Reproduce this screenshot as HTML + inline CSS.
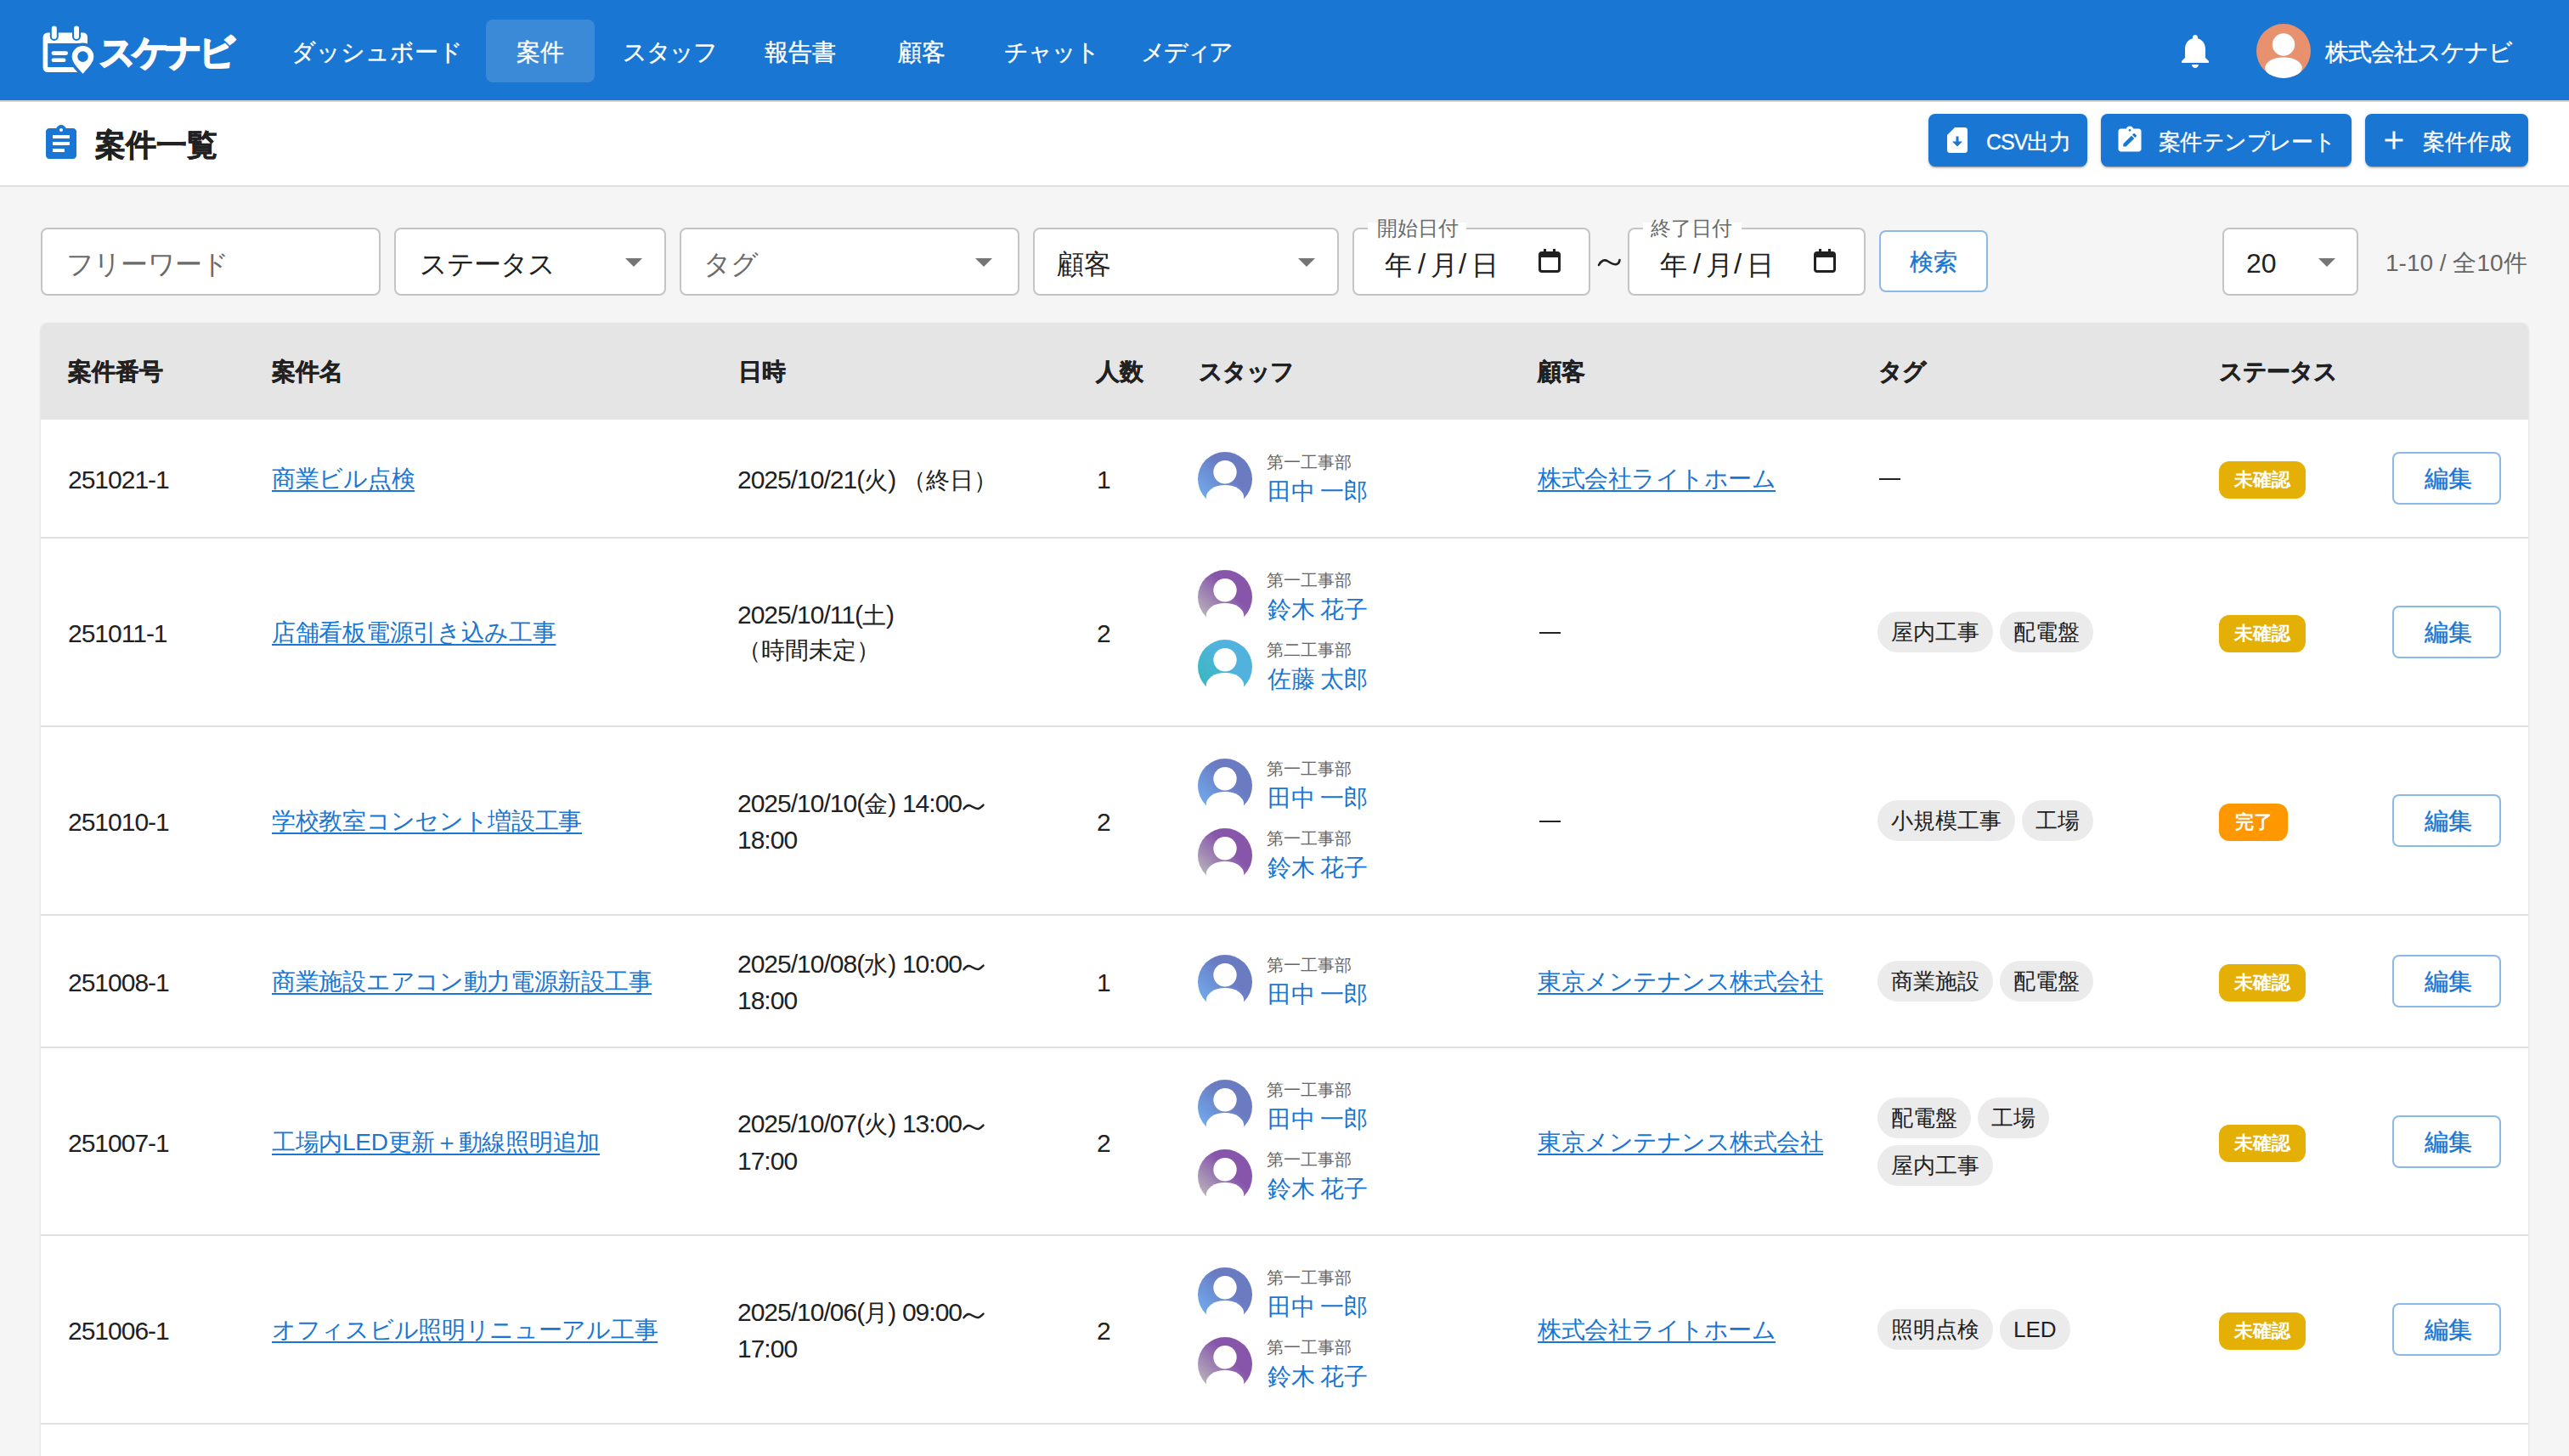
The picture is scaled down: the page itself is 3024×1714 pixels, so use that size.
<!DOCTYPE html><html lang="ja"><head><meta charset="utf-8"><title>案件一覧</title>
<style>
html,body{margin:0;padding:0;width:3024px;height:1714px;overflow:hidden;background:#f5f5f5;font-family:"Liberation Sans",sans-serif;}
.t{position:absolute;line-height:1;white-space:nowrap;}
.b{position:absolute;box-sizing:border-box;}
svg.a{position:absolute;display:block;}
svg.i{display:inline-block;}
.d{font-size:30px;letter-spacing:-1px;}
</style></head><body>
<div class="b" style="left:0;top:0;width:3024px;height:118px;background:#1976d2;box-shadow:0 1px 3px rgba(0,0,0,0.25);"></div>
<svg class="a" style="left:44px;top:26px" width="72" height="66" viewBox="44 26 72 66">
<path fill="#fff" fill-rule="evenodd" d="M56 38.5h42a5 5 0 0 1 5 5V85H56a5.4 5.4 0 0 1-5.4-5.4V43.9a5.4 5.4 0 0 1 5.4-5.4zM56.2 51v28h41.2V51z"/>
<rect x="59.8" y="29.5" width="8" height="17.5" rx="4" fill="#fff" stroke="#1976d2" stroke-width="2"/>
<rect x="86" y="29.5" width="8" height="17.5" rx="4" fill="#fff" stroke="#1976d2" stroke-width="2"/>
<rect x="60.6" y="60.3" width="19.4" height="4.6" rx="2.3" fill="#fff"/>
<rect x="60.6" y="68.4" width="16.9" height="4.6" rx="2.3" fill="#fff"/>
<path fill="#fff" stroke="#1976d2" stroke-width="3.5" d="M97.5 52.3a14.6 14.6 0 0 1 14.6 14.6c0 8-8.5 15.5-14.6 22.5c-6.1-7-14.6-14.5-14.6-22.5a14.6 14.6 0 0 1 14.6-14.6z"/>
<circle cx="97.5" cy="66.6" r="6.3" fill="#1976d2"/>
</svg>
<div class="t" style="left:117px;top:40.6px;font-size:42px;color:#fff;font-weight:bold;letter-spacing:-4px;-webkit-text-stroke:2px #fff;">スケナビ</div>
<div class="b" style="left:572px;top:23px;width:128px;height:74px;border-radius:8px;background:rgba(255,255,255,0.15);"></div>
<div class="t" style="left:342.5px;top:47.8px;font-size:28px;color:#fff;font-weight:normal;letter-spacing:0px;-webkit-text-stroke:0.35px #fff;">ダッシュボード</div>
<div class="t" style="left:608px;top:47.8px;font-size:28px;color:#fff;font-weight:normal;letter-spacing:0px;-webkit-text-stroke:0.35px #fff;">案件</div>
<div class="t" style="left:733px;top:47.8px;font-size:28px;color:#fff;font-weight:normal;letter-spacing:-1.5px;-webkit-text-stroke:0.35px #fff;">スタッフ</div>
<div class="t" style="left:899.5px;top:47.8px;font-size:28px;color:#fff;font-weight:normal;letter-spacing:0px;-webkit-text-stroke:0.35px #fff;">報告書</div>
<div class="t" style="left:1057px;top:47.8px;font-size:28px;color:#fff;font-weight:normal;letter-spacing:0px;-webkit-text-stroke:0.35px #fff;">顧客</div>
<div class="t" style="left:1181.5px;top:47.8px;font-size:28px;color:#fff;font-weight:normal;letter-spacing:-1px;-webkit-text-stroke:0.35px #fff;">チャット</div>
<div class="t" style="left:1343px;top:47.8px;font-size:28px;color:#fff;font-weight:normal;letter-spacing:-2.2px;-webkit-text-stroke:0.35px #fff;">メディア</div>
<svg class="a" style="left:2560px;top:35.6px" width="48" height="48" viewBox="0 0 24 24"><path fill="#fff" d="M12 22c1.1 0 2-.9 2-2h-4c0 1.1.89 2 2 2zm6-6v-5c0-3.07-1.64-5.64-4.5-6.32V4c0-.83-.67-1.5-1.5-1.5s-1.5.67-1.5 1.5v.68C7.63 5.36 6 7.92 6 11v5l-2 2v1h16v-1l-2-2z"/></svg>
<svg class="a" style="left:2656px;top:28px" width="64" height="64" viewBox="0 0 64 64"><defs><clipPath id="ch"><circle cx="32" cy="32" r="32"/></clipPath></defs>
<circle cx="32" cy="32" r="32" fill="#e8916f"/><g clip-path="url(#ch)" fill="#fff"><circle cx="32" cy="24.5" r="13.2"/><ellipse cx="32" cy="52" rx="21.8" ry="12.6"/></g></svg>
<div class="t" style="left:2737px;top:47.5px;font-size:28px;color:#fff;font-weight:normal;letter-spacing:-1px;-webkit-text-stroke:0.35px #fff;">株式会社スケナビ</div>
<div class="b" style="left:0;top:118px;width:3024px;height:102px;background:#fff;border-bottom:2px solid #e0e0e0;"></div>
<div class="b" style="left:0;top:118px;width:3024px;height:2px;background:#d2d2d2;"></div>
<svg class="a" style="left:48px;top:145px" width="48" height="48" viewBox="0 0 24 24"><path fill="#1976d2" d="M19 3h-4.18C14.4 1.84 13.3 1 12 1c-1.3 0-2.4.84-2.82 2H5c-1.1 0-2 .9-2 2v14c0 1.1.9 2 2 2h14c1.1 0 2-.9 2-2V5c0-1.1-.9-2-2-2zm-7 0c.55 0 1 .45 1 1s-.45 1-1 1-1-.45-1-1 .45-1 1-1zm2 14H7v-2h7v2zm3-4H7v-2h10v2zm0-4H7V7h10v2z"/></svg>
<div class="t" style="left:112px;top:152.5px;font-size:36px;color:#212121;font-weight:bold;-webkit-text-stroke:0.6px #212121;">案件一覧</div>
<div class="b" style="left:2270px;top:134px;width:187px;height:62px;border-radius:8px;background:#1976d2;box-shadow:0 3px 1px -2px rgba(0,0,0,0.2),0 2px 2px 0 rgba(0,0,0,0.14),0 1px 5px 0 rgba(0,0,0,0.12);"></div>
<div class="b" style="left:2473px;top:134px;width:295px;height:62px;border-radius:8px;background:#1976d2;box-shadow:0 3px 1px -2px rgba(0,0,0,0.2),0 2px 2px 0 rgba(0,0,0,0.14),0 1px 5px 0 rgba(0,0,0,0.12);"></div>
<div class="b" style="left:2784px;top:134px;width:192px;height:62px;border-radius:8px;background:#1976d2;box-shadow:0 3px 1px -2px rgba(0,0,0,0.2),0 2px 2px 0 rgba(0,0,0,0.14),0 1px 5px 0 rgba(0,0,0,0.12);"></div>
<svg class="a" style="left:2286px;top:147px" width="36" height="36" viewBox="0 0 24 24"><path fill="#fff" d="M18 2h-8L4 8v12c0 1.1.9 2 2 2h12c1.1 0 2-.9 2-2V4c0-1.1-.9-2-2-2zm-6 15-4-4h3V9.02L13 9v4h3l-4 4z"/></svg>
<div class="t" style="left:2338px;top:153.6px;font-size:26px;color:#fff;font-weight:normal;-webkit-text-stroke:0.3px #fff;"><span style="font-size:25px;letter-spacing:-1px">CSV</span>出力</div>
<svg class="a" style="left:2488.5px;top:147px" width="36" height="36" viewBox="0 0 24 24"><path fill="#fff" d="M19 3h-4.18C14.4 1.84 13.3 1 12 1c-1.3 0-2.4.84-2.82 2H5c-1.1 0-2 .9-2 2v14c0 1.1.9 2 2 2h14c1.1 0 2-.9 2-2V5c0-1.1-.9-2-2-2zm-7 .3c.5 0 .9.4.9.9s-.4.9-.9.9-.9-.4-.9-.9.4-.9.9-.9z"/><g transform="translate(6.9 6.6) scale(0.58) translate(-3 -3)"><path fill="#1976d2" d="M3 17.25V21h3.75L17.81 9.94l-3.75-3.75L3 17.25zM20.71 7.04c.39-.39.39-1.02 0-1.41l-2.34-2.34c-.39-.39-1.02-.39-1.41 0l-1.83 1.83 3.75 3.75 1.83-1.83z"/></g></svg>
<div class="t" style="left:2541px;top:153.6px;font-size:26px;color:#fff;font-weight:normal;letter-spacing:-0.6px;-webkit-text-stroke:0.3px #fff;">案件テンプレート</div>
<svg class="a" style="left:2799.5px;top:146.5px" width="36" height="36" viewBox="0 0 24 24"><path fill="#fff" d="M19 13h-6v6h-2v-6H5v-2h6V5h2v6h6v2z"/></svg>
<div class="t" style="left:2852px;top:153.6px;font-size:26px;color:#fff;font-weight:normal;-webkit-text-stroke:0.3px #fff;">案件作成</div>
<div class="b" style="left:48px;top:268px;width:400px;height:80px;border:2px solid #c4c4c4;border-radius:8px;background:#fff;"></div>
<div class="t" style="left:78px;top:295px;font-size:32px;color:#6b6b6b;font-weight:normal;letter-spacing:-0.8px;">フリーワード</div>
<div class="b" style="left:464px;top:268px;width:320px;height:80px;border:2px solid #c4c4c4;border-radius:8px;background:#fff;"></div>
<div class="t" style="left:494px;top:295px;font-size:32px;color:#212121;font-weight:normal;letter-spacing:-1px;">ステータス</div>
<svg class="a" style="left:736px;top:304px" width="20" height="10" viewBox="0 0 20 10"><path fill="#757575" d="M0 0h20L10 10z"/></svg>
<div class="b" style="left:800px;top:268px;width:400px;height:80px;border:2px solid #c4c4c4;border-radius:8px;background:#fff;"></div>
<div class="t" style="left:828px;top:295px;font-size:32px;color:#6b6b6b;font-weight:normal;letter-spacing:-1px;">タグ</div>
<svg class="a" style="left:1148px;top:304px" width="20" height="10" viewBox="0 0 20 10"><path fill="#757575" d="M0 0h20L10 10z"/></svg>
<div class="b" style="left:1216px;top:268px;width:360px;height:80px;border:2px solid #c4c4c4;border-radius:8px;background:#fff;"></div>
<div class="t" style="left:1244px;top:295px;font-size:32px;color:#212121;font-weight:normal;">顧客</div>
<svg class="a" style="left:1528px;top:304px" width="20" height="10" viewBox="0 0 20 10"><path fill="#757575" d="M0 0h20L10 10z"/></svg>
<div class="b" style="left:1592px;top:268px;width:280px;height:80px;border:2px solid #c4c4c4;border-radius:8px;background:#fff;"></div>
<div class="b" style="left:1610px;top:262px;width:116px;height:10px;background:#fff;"></div>
<div class="t" style="left:1621px;top:257px;font-size:24px;color:#6b6b6b;font-weight:normal;">開始日付</div>
<div class="t" style="left:1630px;top:295.5px;font-size:32px;color:#212121;font-weight:normal;">年</div>
<div class="t" style="left:1669px;top:294px;font-size:33px;color:#212121;font-weight:normal;">/</div>
<div class="t" style="left:1684px;top:295.5px;font-size:32px;color:#212121;font-weight:normal;">月</div>
<div class="t" style="left:1717px;top:294px;font-size:33px;color:#212121;font-weight:normal;">/</div>
<div class="t" style="left:1732px;top:295.5px;font-size:32px;color:#212121;font-weight:normal;">日</div>
<svg class="a" style="left:1811px;top:293px" width="26" height="28" viewBox="0 0 26 28"><path fill="#212121" fill-rule="evenodd" d="M6 0h3v3h8V0h3v3h2a4 4 0 0 1 4 4v17a4 4 0 0 1-4 4H4a4 4 0 0 1-4-4V7a4 4 0 0 1 4-4h2zM3 10v14a1 1 0 0 0 1 1h18a1 1 0 0 0 1-1V10z"/></svg>
<svg class="a" style="left:1880px;top:302px" width="28" height="13" viewBox="0 0 28 13"><path d="M2 10C5 4.5 8.5 3 12.5 5.5S20 10 23 9S26 6.5 26.5 4" fill="none" stroke="#212121" stroke-width="2.6" stroke-linecap="round"/></svg>
<div class="b" style="left:1916px;top:268px;width:280px;height:80px;border:2px solid #c4c4c4;border-radius:8px;background:#fff;"></div>
<div class="b" style="left:1934px;top:262px;width:116px;height:10px;background:#fff;"></div>
<div class="t" style="left:1943px;top:257px;font-size:24px;color:#6b6b6b;font-weight:normal;">終了日付</div>
<div class="t" style="left:1954px;top:295.5px;font-size:32px;color:#212121;font-weight:normal;">年</div>
<div class="t" style="left:1993px;top:294px;font-size:33px;color:#212121;font-weight:normal;">/</div>
<div class="t" style="left:2008px;top:295.5px;font-size:32px;color:#212121;font-weight:normal;">月</div>
<div class="t" style="left:2041px;top:294px;font-size:33px;color:#212121;font-weight:normal;">/</div>
<div class="t" style="left:2056px;top:295.5px;font-size:32px;color:#212121;font-weight:normal;">日</div>
<svg class="a" style="left:2135px;top:293px" width="26" height="28" viewBox="0 0 26 28"><path fill="#212121" fill-rule="evenodd" d="M6 0h3v3h8V0h3v3h2a4 4 0 0 1 4 4v17a4 4 0 0 1-4 4H4a4 4 0 0 1-4-4V7a4 4 0 0 1 4-4h2zM3 10v14a1 1 0 0 0 1 1h18a1 1 0 0 0 1-1V10z"/></svg>
<div class="b" style="left:2212px;top:271px;width:128px;height:73px;border:2px solid rgba(25,118,210,0.5);border-radius:8px;background:#fff;"></div>
<div class="t" style="left:2248px;top:295px;font-size:28px;color:#1976d2;font-weight:normal;-webkit-text-stroke:0.3px #1976d2;">検索</div>
<div class="b" style="left:2616px;top:268px;width:160px;height:80px;border:2px solid #c4c4c4;border-radius:8px;background:#fff;"></div>
<div class="t" style="left:2644px;top:294px;font-size:32px;color:#212121;font-weight:normal;">20</div>
<svg class="a" style="left:2729px;top:304px" width="20" height="10" viewBox="0 0 20 10"><path fill="#757575" d="M0 0h20L10 10z"/></svg>
<div class="t" style="left:2808px;top:296px;font-size:28px;color:#666;font-weight:normal;">1-10 / 全10件</div>
<div class="b" style="left:48px;top:380px;width:2928px;height:1400px;background:#fff;border-radius:8px;box-shadow:0 2px 1px -1px rgba(0,0,0,0.2),0 1px 1px 0 rgba(0,0,0,0.14),0 1px 3px 0 rgba(0,0,0,0.12);"></div>
<div class="b" style="left:48px;top:380px;width:2928px;height:114px;background:#e5e5e5;border-radius:8px 8px 0 0;"></div>
<div class="t" style="left:80px;top:423.5px;font-size:28px;color:#212121;font-weight:bold;letter-spacing:0px;-webkit-text-stroke:0.4px #212121;">案件番号</div>
<div class="t" style="left:320px;top:423.5px;font-size:28px;color:#212121;font-weight:bold;letter-spacing:0px;-webkit-text-stroke:0.4px #212121;">案件名</div>
<div class="t" style="left:869px;top:423.5px;font-size:28px;color:#212121;font-weight:bold;letter-spacing:0px;-webkit-text-stroke:0.4px #212121;">日時</div>
<div class="t" style="left:1290px;top:423.5px;font-size:28px;color:#212121;font-weight:bold;letter-spacing:0px;-webkit-text-stroke:0.4px #212121;">人数</div>
<div class="t" style="left:1411px;top:423.5px;font-size:28px;color:#212121;font-weight:bold;letter-spacing:-1px;-webkit-text-stroke:0.4px #212121;">スタッフ</div>
<div class="t" style="left:1810px;top:423.5px;font-size:28px;color:#212121;font-weight:bold;letter-spacing:0px;-webkit-text-stroke:0.4px #212121;">顧客</div>
<div class="t" style="left:2211px;top:423.5px;font-size:28px;color:#212121;font-weight:bold;letter-spacing:-1px;-webkit-text-stroke:0.4px #212121;">タグ</div>
<div class="t" style="left:2612px;top:423.5px;font-size:28px;color:#212121;font-weight:bold;letter-spacing:-1px;-webkit-text-stroke:0.4px #212121;">ステータス</div>
<div class="b" style="left:48px;top:632px;width:2928px;height:2px;background:#e0e0e0;"></div>
<div class="b" style="left:48px;top:854px;width:2928px;height:2px;background:#e0e0e0;"></div>
<div class="b" style="left:48px;top:1076px;width:2928px;height:2px;background:#e0e0e0;"></div>
<div class="b" style="left:48px;top:1232px;width:2928px;height:2px;background:#e0e0e0;"></div>
<div class="b" style="left:48px;top:1453px;width:2928px;height:2px;background:#e0e0e0;"></div>
<div class="b" style="left:48px;top:1675px;width:2928px;height:2px;background:#e0e0e0;"></div>
<div class="t" style="left:80px;top:550.3px;font-size:28px;color:#212121;font-weight:normal;"><span class="d">251021-1</span></div>
<div class="t" style="left:320px;top:550.3px;font-size:28px;color:#1976d2;font-weight:normal;letter-spacing:-0.3px;text-decoration:underline;text-decoration-thickness:2px;text-underline-offset:4px;">商業ビル点検</div>
<div class="t" style="left:868px;top:550.3px;font-size:28px;color:#212121;font-weight:normal;"><span class="d">2025/10/21(</span>火<span class="d">)</span> （終日）</div>
<div class="t" style="left:1291px;top:550.3px;font-size:28px;color:#212121;font-weight:normal;"><span class="d">1</span></div>
<svg class="a" style="left:1410px;top:531.7px;overflow:visible" width="64" height="64" viewBox="0 0 64 64"><defs><linearGradient id="g1" x1="0" y1="1" x2="1" y2="0"><stop offset="0.15" stop-color="#70a8ea"/><stop offset="0.6" stop-color="#6a7bc2"/></linearGradient></defs><circle cx="32" cy="32" r="32" fill="url(#g1)"/><g fill="#fff"><circle cx="32" cy="23.8" r="13.7"/><ellipse cx="32" cy="53.5" rx="22.2" ry="14.6"/></g></svg>
<div class="t" style="left:1491px;top:534.1px;font-size:20px;color:#666;font-weight:normal;">第一工事部</div>
<div class="t" style="left:1492px;top:564.7px;font-size:28px;color:#1976d2;font-weight:normal;letter-spacing:-0.5px;">田中 一郎</div>
<div class="t" style="left:1810px;top:550.3px;font-size:28px;color:#1976d2;font-weight:normal;letter-spacing:-0.5px;text-decoration:underline;text-decoration-thickness:2px;text-underline-offset:4px;">株式会社ライトホーム</div>
<div class="b" style="left:2212px;top:563.0px;width:25px;height:2px;background:#222;"></div>
<div class="b" style="left:2612px;top:543.0px;width:102px;height:44px;border-radius:12px;background:#e5b006;color:#fff;font-size:22px;font-weight:bold;line-height:44px;text-align:center;white-space:nowrap;">未確認</div>
<div class="b" style="left:2816px;top:532.0px;width:128px;height:62px;border:2px solid rgba(25,118,210,0.5);border-radius:8px;background:#fff;"></div>
<div class="t" style="left:2853.5px;top:550.3px;font-size:28px;color:#1976d2;font-weight:normal;-webkit-text-stroke:0.4px #1976d2;">編集</div>
<div class="t" style="left:80px;top:731.3px;font-size:28px;color:#212121;font-weight:normal;"><span class="d">251011-1</span></div>
<div class="t" style="left:320px;top:731.3px;font-size:28px;color:#1976d2;font-weight:normal;letter-spacing:-0.3px;text-decoration:underline;text-decoration-thickness:2px;text-underline-offset:4px;">店舗看板電源引き込み工事</div>
<div class="t" style="left:868px;top:708.8px;font-size:28px;color:#212121;font-weight:normal;"><span class="d">2025/10/11(</span>土<span class="d">)</span></div>
<div class="t" style="left:868px;top:752.3px;font-size:28px;color:#212121;font-weight:normal;">（時間未定）</div>
<div class="t" style="left:1291px;top:731.3px;font-size:28px;color:#212121;font-weight:normal;"><span class="d">2</span></div>
<svg class="a" style="left:1410px;top:671px;overflow:visible" width="64" height="64" viewBox="0 0 64 64"><defs><linearGradient id="g2" x1="0" y1="1" x2="1" y2="0"><stop offset="0.15" stop-color="#b4acba"/><stop offset="0.6" stop-color="#8756ab"/></linearGradient></defs><circle cx="32" cy="32" r="32" fill="url(#g2)"/><g fill="#fff"><circle cx="32" cy="23.8" r="13.7"/><ellipse cx="32" cy="53.5" rx="22.2" ry="14.6"/></g></svg>
<div class="t" style="left:1491px;top:673.4px;font-size:20px;color:#666;font-weight:normal;">第一工事部</div>
<div class="t" style="left:1492px;top:704.0px;font-size:28px;color:#1976d2;font-weight:normal;letter-spacing:-0.5px;">鈴木 花子</div>
<svg class="a" style="left:1410px;top:752.8px;overflow:visible" width="64" height="64" viewBox="0 0 64 64"><defs><linearGradient id="g3" x1="0" y1="1" x2="1" y2="0"><stop offset="0.15" stop-color="#3ab8c0"/><stop offset="0.6" stop-color="#52b2de"/></linearGradient></defs><circle cx="32" cy="32" r="32" fill="url(#g3)"/><g fill="#fff"><circle cx="32" cy="23.8" r="13.7"/><ellipse cx="32" cy="53.5" rx="22.2" ry="14.6"/></g></svg>
<div class="t" style="left:1491px;top:755.2px;font-size:20px;color:#666;font-weight:normal;">第二工事部</div>
<div class="t" style="left:1492px;top:785.8px;font-size:28px;color:#1976d2;font-weight:normal;letter-spacing:-0.5px;">佐藤 太郎</div>
<div class="b" style="left:1812px;top:744.0px;width:25px;height:2px;background:#222;"></div>
<div class="b" style="left:2210px;top:720.0px;display:flex;gap:8px;"><span style="display:inline-block;height:48px;line-height:48px;padding:0 16px;border-radius:24px;background:#ebebeb;color:#212121;font-size:26px;white-space:nowrap;">屋内工事</span><span style="display:inline-block;height:48px;line-height:48px;padding:0 16px;border-radius:24px;background:#ebebeb;color:#212121;font-size:26px;white-space:nowrap;">配電盤</span></div>
<div class="b" style="left:2612px;top:724.0px;width:102px;height:44px;border-radius:12px;background:#e5b006;color:#fff;font-size:22px;font-weight:bold;line-height:44px;text-align:center;white-space:nowrap;">未確認</div>
<div class="b" style="left:2816px;top:713.0px;width:128px;height:62px;border:2px solid rgba(25,118,210,0.5);border-radius:8px;background:#fff;"></div>
<div class="t" style="left:2853.5px;top:731.3px;font-size:28px;color:#1976d2;font-weight:normal;-webkit-text-stroke:0.4px #1976d2;">編集</div>
<div class="t" style="left:80px;top:953.3px;font-size:28px;color:#212121;font-weight:normal;"><span class="d">251010-1</span></div>
<div class="t" style="left:320px;top:953.3px;font-size:28px;color:#1976d2;font-weight:normal;letter-spacing:-0.3px;text-decoration:underline;text-decoration-thickness:2px;text-underline-offset:4px;">学校教室コンセント増設工事</div>
<div class="t" style="left:868px;top:930.8px;font-size:28px;color:#212121;font-weight:normal;"><span class="d">2025/10/10(</span>金<span class="d">)</span> <span class="d">14:00</span><svg class="i" width="26" height="8" viewBox="0 0 26 8" style="vertical-align:2px;margin-left:1px"><path d="M1.5 6.2C4 2.5 7 1.2 10 2.8S16 6.8 19 5.8S23 3 24.5 1.6" fill="none" stroke="#212121" stroke-width="2.4" stroke-linecap="round"/></svg></div>
<div class="t" style="left:868px;top:974.3px;font-size:28px;color:#212121;font-weight:normal;"><span class="d">18:00</span></div>
<div class="t" style="left:1291px;top:953.3px;font-size:28px;color:#212121;font-weight:normal;"><span class="d">2</span></div>
<svg class="a" style="left:1410px;top:893px;overflow:visible" width="64" height="64" viewBox="0 0 64 64"><defs><linearGradient id="g4" x1="0" y1="1" x2="1" y2="0"><stop offset="0.15" stop-color="#70a8ea"/><stop offset="0.6" stop-color="#6a7bc2"/></linearGradient></defs><circle cx="32" cy="32" r="32" fill="url(#g4)"/><g fill="#fff"><circle cx="32" cy="23.8" r="13.7"/><ellipse cx="32" cy="53.5" rx="22.2" ry="14.6"/></g></svg>
<div class="t" style="left:1491px;top:895.4px;font-size:20px;color:#666;font-weight:normal;">第一工事部</div>
<div class="t" style="left:1492px;top:926.0px;font-size:28px;color:#1976d2;font-weight:normal;letter-spacing:-0.5px;">田中 一郎</div>
<svg class="a" style="left:1410px;top:974.8px;overflow:visible" width="64" height="64" viewBox="0 0 64 64"><defs><linearGradient id="g5" x1="0" y1="1" x2="1" y2="0"><stop offset="0.15" stop-color="#b4acba"/><stop offset="0.6" stop-color="#8756ab"/></linearGradient></defs><circle cx="32" cy="32" r="32" fill="url(#g5)"/><g fill="#fff"><circle cx="32" cy="23.8" r="13.7"/><ellipse cx="32" cy="53.5" rx="22.2" ry="14.6"/></g></svg>
<div class="t" style="left:1491px;top:977.2px;font-size:20px;color:#666;font-weight:normal;">第一工事部</div>
<div class="t" style="left:1492px;top:1007.8px;font-size:28px;color:#1976d2;font-weight:normal;letter-spacing:-0.5px;">鈴木 花子</div>
<div class="b" style="left:1812px;top:966.0px;width:25px;height:2px;background:#222;"></div>
<div class="b" style="left:2210px;top:942.0px;display:flex;gap:8px;"><span style="display:inline-block;height:48px;line-height:48px;padding:0 16px;border-radius:24px;background:#ebebeb;color:#212121;font-size:26px;white-space:nowrap;">小規模工事</span><span style="display:inline-block;height:48px;line-height:48px;padding:0 16px;border-radius:24px;background:#ebebeb;color:#212121;font-size:26px;white-space:nowrap;">工場</span></div>
<div class="b" style="left:2612px;top:946.0px;width:81px;height:44px;border-radius:12px;background:#ff9800;color:#fff;font-size:22px;font-weight:bold;line-height:44px;text-align:center;white-space:nowrap;">完了</div>
<div class="b" style="left:2816px;top:935.0px;width:128px;height:62px;border:2px solid rgba(25,118,210,0.5);border-radius:8px;background:#fff;"></div>
<div class="t" style="left:2853.5px;top:953.3px;font-size:28px;color:#1976d2;font-weight:normal;-webkit-text-stroke:0.4px #1976d2;">編集</div>
<div class="t" style="left:80px;top:1142.3px;font-size:28px;color:#212121;font-weight:normal;"><span class="d">251008-1</span></div>
<div class="t" style="left:320px;top:1142.3px;font-size:28px;color:#1976d2;font-weight:normal;letter-spacing:-0.3px;text-decoration:underline;text-decoration-thickness:2px;text-underline-offset:4px;">商業施設エアコン動力電源新設工事</div>
<div class="t" style="left:868px;top:1119.8px;font-size:28px;color:#212121;font-weight:normal;"><span class="d">2025/10/08(</span>水<span class="d">)</span> <span class="d">10:00</span><svg class="i" width="26" height="8" viewBox="0 0 26 8" style="vertical-align:2px;margin-left:1px"><path d="M1.5 6.2C4 2.5 7 1.2 10 2.8S16 6.8 19 5.8S23 3 24.5 1.6" fill="none" stroke="#212121" stroke-width="2.4" stroke-linecap="round"/></svg></div>
<div class="t" style="left:868px;top:1163.3px;font-size:28px;color:#212121;font-weight:normal;"><span class="d">18:00</span></div>
<div class="t" style="left:1291px;top:1142.3px;font-size:28px;color:#212121;font-weight:normal;"><span class="d">1</span></div>
<svg class="a" style="left:1410px;top:1123.7px;overflow:visible" width="64" height="64" viewBox="0 0 64 64"><defs><linearGradient id="g6" x1="0" y1="1" x2="1" y2="0"><stop offset="0.15" stop-color="#70a8ea"/><stop offset="0.6" stop-color="#6a7bc2"/></linearGradient></defs><circle cx="32" cy="32" r="32" fill="url(#g6)"/><g fill="#fff"><circle cx="32" cy="23.8" r="13.7"/><ellipse cx="32" cy="53.5" rx="22.2" ry="14.6"/></g></svg>
<div class="t" style="left:1491px;top:1126.1px;font-size:20px;color:#666;font-weight:normal;">第一工事部</div>
<div class="t" style="left:1492px;top:1156.7px;font-size:28px;color:#1976d2;font-weight:normal;letter-spacing:-0.5px;">田中 一郎</div>
<div class="t" style="left:1810px;top:1142.3px;font-size:28px;color:#1976d2;font-weight:normal;letter-spacing:-0.5px;text-decoration:underline;text-decoration-thickness:2px;text-underline-offset:4px;">東京メンテナンス株式会社</div>
<div class="b" style="left:2210px;top:1131.0px;display:flex;gap:8px;"><span style="display:inline-block;height:48px;line-height:48px;padding:0 16px;border-radius:24px;background:#ebebeb;color:#212121;font-size:26px;white-space:nowrap;">商業施設</span><span style="display:inline-block;height:48px;line-height:48px;padding:0 16px;border-radius:24px;background:#ebebeb;color:#212121;font-size:26px;white-space:nowrap;">配電盤</span></div>
<div class="b" style="left:2612px;top:1135.0px;width:102px;height:44px;border-radius:12px;background:#e5b006;color:#fff;font-size:22px;font-weight:bold;line-height:44px;text-align:center;white-space:nowrap;">未確認</div>
<div class="b" style="left:2816px;top:1124.0px;width:128px;height:62px;border:2px solid rgba(25,118,210,0.5);border-radius:8px;background:#fff;"></div>
<div class="t" style="left:2853.5px;top:1142.3px;font-size:28px;color:#1976d2;font-weight:normal;-webkit-text-stroke:0.4px #1976d2;">編集</div>
<div class="t" style="left:80px;top:1330.8px;font-size:28px;color:#212121;font-weight:normal;"><span class="d">251007-1</span></div>
<div class="t" style="left:320px;top:1330.8px;font-size:28px;color:#1976d2;font-weight:normal;letter-spacing:-0.3px;text-decoration:underline;text-decoration-thickness:2px;text-underline-offset:4px;">工場内LED更新＋動線照明追加</div>
<div class="t" style="left:868px;top:1308.3px;font-size:28px;color:#212121;font-weight:normal;"><span class="d">2025/10/07(</span>火<span class="d">)</span> <span class="d">13:00</span><svg class="i" width="26" height="8" viewBox="0 0 26 8" style="vertical-align:2px;margin-left:1px"><path d="M1.5 6.2C4 2.5 7 1.2 10 2.8S16 6.8 19 5.8S23 3 24.5 1.6" fill="none" stroke="#212121" stroke-width="2.4" stroke-linecap="round"/></svg></div>
<div class="t" style="left:868px;top:1351.8px;font-size:28px;color:#212121;font-weight:normal;"><span class="d">17:00</span></div>
<div class="t" style="left:1291px;top:1330.8px;font-size:28px;color:#212121;font-weight:normal;"><span class="d">2</span></div>
<svg class="a" style="left:1410px;top:1271px;overflow:visible" width="64" height="64" viewBox="0 0 64 64"><defs><linearGradient id="g7" x1="0" y1="1" x2="1" y2="0"><stop offset="0.15" stop-color="#70a8ea"/><stop offset="0.6" stop-color="#6a7bc2"/></linearGradient></defs><circle cx="32" cy="32" r="32" fill="url(#g7)"/><g fill="#fff"><circle cx="32" cy="23.8" r="13.7"/><ellipse cx="32" cy="53.5" rx="22.2" ry="14.6"/></g></svg>
<div class="t" style="left:1491px;top:1273.4px;font-size:20px;color:#666;font-weight:normal;">第一工事部</div>
<div class="t" style="left:1492px;top:1304.0px;font-size:28px;color:#1976d2;font-weight:normal;letter-spacing:-0.5px;">田中 一郎</div>
<svg class="a" style="left:1410px;top:1352.8px;overflow:visible" width="64" height="64" viewBox="0 0 64 64"><defs><linearGradient id="g8" x1="0" y1="1" x2="1" y2="0"><stop offset="0.15" stop-color="#b4acba"/><stop offset="0.6" stop-color="#8756ab"/></linearGradient></defs><circle cx="32" cy="32" r="32" fill="url(#g8)"/><g fill="#fff"><circle cx="32" cy="23.8" r="13.7"/><ellipse cx="32" cy="53.5" rx="22.2" ry="14.6"/></g></svg>
<div class="t" style="left:1491px;top:1355.2px;font-size:20px;color:#666;font-weight:normal;">第一工事部</div>
<div class="t" style="left:1492px;top:1385.8px;font-size:28px;color:#1976d2;font-weight:normal;letter-spacing:-0.5px;">鈴木 花子</div>
<div class="t" style="left:1810px;top:1330.8px;font-size:28px;color:#1976d2;font-weight:normal;letter-spacing:-0.5px;text-decoration:underline;text-decoration-thickness:2px;text-underline-offset:4px;">東京メンテナンス株式会社</div>
<div class="b" style="left:2210px;top:1291.5px;display:flex;gap:8px;"><span style="display:inline-block;height:48px;line-height:48px;padding:0 16px;border-radius:24px;background:#ebebeb;color:#212121;font-size:26px;white-space:nowrap;">配電盤</span><span style="display:inline-block;height:48px;line-height:48px;padding:0 16px;border-radius:24px;background:#ebebeb;color:#212121;font-size:26px;white-space:nowrap;">工場</span></div>
<div class="b" style="left:2210px;top:1347.5px;display:flex;gap:8px;"><span style="display:inline-block;height:48px;line-height:48px;padding:0 16px;border-radius:24px;background:#ebebeb;color:#212121;font-size:26px;white-space:nowrap;">屋内工事</span></div>
<div class="b" style="left:2612px;top:1323.5px;width:102px;height:44px;border-radius:12px;background:#e5b006;color:#fff;font-size:22px;font-weight:bold;line-height:44px;text-align:center;white-space:nowrap;">未確認</div>
<div class="b" style="left:2816px;top:1312.5px;width:128px;height:62px;border:2px solid rgba(25,118,210,0.5);border-radius:8px;background:#fff;"></div>
<div class="t" style="left:2853.5px;top:1330.8px;font-size:28px;color:#1976d2;font-weight:normal;-webkit-text-stroke:0.4px #1976d2;">編集</div>
<div class="t" style="left:80px;top:1552.3px;font-size:28px;color:#212121;font-weight:normal;"><span class="d">251006-1</span></div>
<div class="t" style="left:320px;top:1552.3px;font-size:28px;color:#1976d2;font-weight:normal;letter-spacing:-0.3px;text-decoration:underline;text-decoration-thickness:2px;text-underline-offset:4px;">オフィスビル照明リニューアル工事</div>
<div class="t" style="left:868px;top:1529.8px;font-size:28px;color:#212121;font-weight:normal;"><span class="d">2025/10/06(</span>月<span class="d">)</span> <span class="d">09:00</span><svg class="i" width="26" height="8" viewBox="0 0 26 8" style="vertical-align:2px;margin-left:1px"><path d="M1.5 6.2C4 2.5 7 1.2 10 2.8S16 6.8 19 5.8S23 3 24.5 1.6" fill="none" stroke="#212121" stroke-width="2.4" stroke-linecap="round"/></svg></div>
<div class="t" style="left:868px;top:1573.3px;font-size:28px;color:#212121;font-weight:normal;"><span class="d">17:00</span></div>
<div class="t" style="left:1291px;top:1552.3px;font-size:28px;color:#212121;font-weight:normal;"><span class="d">2</span></div>
<svg class="a" style="left:1410px;top:1492px;overflow:visible" width="64" height="64" viewBox="0 0 64 64"><defs><linearGradient id="g9" x1="0" y1="1" x2="1" y2="0"><stop offset="0.15" stop-color="#70a8ea"/><stop offset="0.6" stop-color="#6a7bc2"/></linearGradient></defs><circle cx="32" cy="32" r="32" fill="url(#g9)"/><g fill="#fff"><circle cx="32" cy="23.8" r="13.7"/><ellipse cx="32" cy="53.5" rx="22.2" ry="14.6"/></g></svg>
<div class="t" style="left:1491px;top:1494.4px;font-size:20px;color:#666;font-weight:normal;">第一工事部</div>
<div class="t" style="left:1492px;top:1525.0px;font-size:28px;color:#1976d2;font-weight:normal;letter-spacing:-0.5px;">田中 一郎</div>
<svg class="a" style="left:1410px;top:1573.8px;overflow:visible" width="64" height="64" viewBox="0 0 64 64"><defs><linearGradient id="g10" x1="0" y1="1" x2="1" y2="0"><stop offset="0.15" stop-color="#b4acba"/><stop offset="0.6" stop-color="#8756ab"/></linearGradient></defs><circle cx="32" cy="32" r="32" fill="url(#g10)"/><g fill="#fff"><circle cx="32" cy="23.8" r="13.7"/><ellipse cx="32" cy="53.5" rx="22.2" ry="14.6"/></g></svg>
<div class="t" style="left:1491px;top:1576.2px;font-size:20px;color:#666;font-weight:normal;">第一工事部</div>
<div class="t" style="left:1492px;top:1606.8px;font-size:28px;color:#1976d2;font-weight:normal;letter-spacing:-0.5px;">鈴木 花子</div>
<div class="t" style="left:1810px;top:1552.3px;font-size:28px;color:#1976d2;font-weight:normal;letter-spacing:-0.5px;text-decoration:underline;text-decoration-thickness:2px;text-underline-offset:4px;">株式会社ライトホーム</div>
<div class="b" style="left:2210px;top:1541.0px;display:flex;gap:8px;"><span style="display:inline-block;height:48px;line-height:48px;padding:0 16px;border-radius:24px;background:#ebebeb;color:#212121;font-size:26px;white-space:nowrap;">照明点検</span><span style="display:inline-block;height:48px;line-height:48px;padding:0 16px;border-radius:24px;background:#ebebeb;color:#212121;font-size:26px;white-space:nowrap;">LED</span></div>
<div class="b" style="left:2612px;top:1545.0px;width:102px;height:44px;border-radius:12px;background:#e5b006;color:#fff;font-size:22px;font-weight:bold;line-height:44px;text-align:center;white-space:nowrap;">未確認</div>
<div class="b" style="left:2816px;top:1534.0px;width:128px;height:62px;border:2px solid rgba(25,118,210,0.5);border-radius:8px;background:#fff;"></div>
<div class="t" style="left:2853.5px;top:1552.3px;font-size:28px;color:#1976d2;font-weight:normal;-webkit-text-stroke:0.4px #1976d2;">編集</div>
</body></html>
